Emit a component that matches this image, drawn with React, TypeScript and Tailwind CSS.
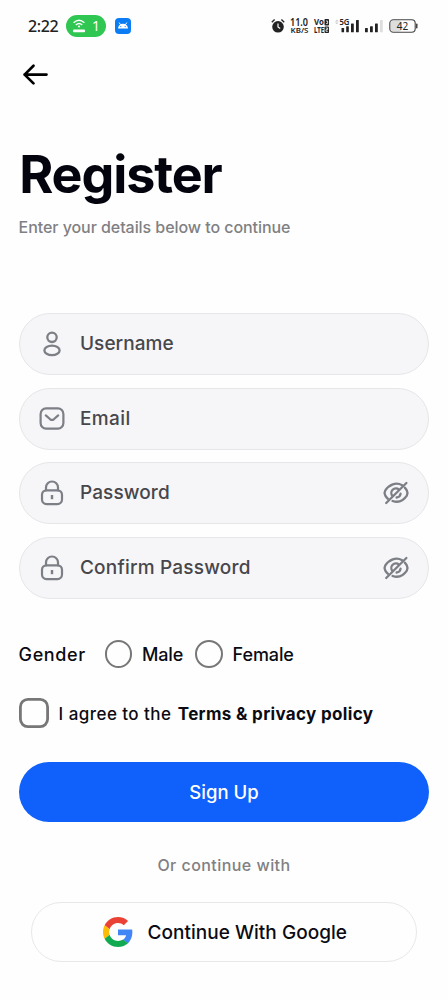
import React from "react";

function UserIcon() {
  return (
    <svg width="28" height="28" viewBox="0 0 28 28" fill="none" stroke="#7c7f85" strokeWidth="2.3">
      <circle cx="14" cy="7.3" r="4.7" />
      <ellipse cx="14" cy="20.4" rx="7.6" ry="4.7" />
    </svg>
  );
}

function MailIcon() {
  return (
    <svg width="28" height="28" viewBox="0 0 28 28" fill="none" stroke="#7c7f85" strokeWidth="2.2" strokeLinecap="round" strokeLinejoin="round">
      <rect x="2.6" y="3.4" width="22.8" height="20.2" rx="5.5" />
      <path d="M7.8 10.4 L12.2 14.3 Q14 15.6 15.8 14.3 L20.2 10.4" />
    </svg>
  );
}

function LockIcon() {
  return (
    <svg width="28" height="28" viewBox="0 0 28 28" fill="none" stroke="#7c7f85" strokeWidth="2.2" strokeLinecap="round">
      <rect x="4" y="11.3" width="20" height="13.8" rx="4.5" />
      <path d="M8 11.3 V8.5 A6 6 0 0 1 20 8.5 V11.3" />
      <path d="M14 16 V20.2" strokeLinecap="butt" strokeWidth="2.4" />
    </svg>
  );
}

function EyeOffIcon() {
  return (
    <svg width="28" height="28" viewBox="0 0 28 28" fill="none" stroke="#7c7f85" strokeWidth="2.3" strokeLinecap="round">
      <path d="M20.2 6.2 C13.8 2.8 7.2 5.6 3.3 11.4 Q1.8 14 3.3 16.6 Q4.4 18.5 6 19.8" />
      <path d="M22.8 8.6 Q24 9.8 24.8 11.4 Q26.2 14 24.8 16.6 C21.2 22 16.4 24 10.6 22" />
      <path d="M17 10.6 A4.6 4.6 0 0 0 10.6 17.2" />
      <path d="M18.6 14.6 A4.6 4.6 0 0 1 14.6 18.5" />
      <path d="M24.4 4 L4.2 24" />
    </svg>
  );
}

function GoogleIcon() {
  return (
    <svg width="30" height="30" viewBox="0 0 48 48">
      <path fill="#EA4335" d="M24 9.5c3.54 0 6.71 1.22 9.21 3.6l6.85-6.85C35.9 2.38 30.47 0 24 0 14.62 0 6.51 5.38 2.56 13.22l7.98 6.19C12.43 13.72 17.74 9.5 24 9.5z" />
      <path fill="#4285F4" d="M46.98 24.55c0-1.57-.15-3.09-.38-4.55H24v9.02h12.94c-.58 2.96-2.26 5.48-4.78 7.18l7.73 6c4.51-4.18 7.09-10.36 7.09-17.65z" />
      <path fill="#FBBC05" d="M10.53 28.59c-.48-1.45-.76-2.99-.76-4.59s.27-3.14.76-4.59l-7.98-6.19C.92 16.46 0 20.12 0 24c0 3.88.92 7.54 2.56 10.78l7.97-6.19z" />
      <path fill="#12AA50" d="M24 48c6.48 0 11.93-2.13 15.89-5.81l-7.73-6c-2.15 1.45-4.92 2.3-8.16 2.3-6.26 0-11.57-4.22-13.47-9.91l-7.98 6.19C6.51 42.62 14.62 48 24 48z" />
    </svg>
  );
}

function StatusBar() {
  return (
    <div className="flex h-[52px] items-center pl-7 pr-[30px] font-['Noto_Sans',sans-serif] text-[#222]">
      <span className="w-[31px] whitespace-nowrap text-[16px] font-medium tracking-[-0.4px]">2:22</span>
      <div className="ml-[7px] flex h-[22px] w-[40px] items-center justify-center gap-[6px] rounded-full bg-[#2fc651] text-white">
        <svg width="14" height="14" viewBox="0 0 14 14" fill="none" stroke="white" strokeWidth="1.4">
          <path d="M1.6 3.8 Q7 -1.4 12.4 3.8 M3.8 6 Q7 3 10.2 6" />
          <circle cx="7" cy="7.5" r="1" fill="white" stroke="none" />
          <rect x="1" y="10.5" width="12" height="2.8" rx="0.8" fill="white" stroke="none" />
        </svg>
        <span className="text-[14px] leading-none">1</span>
      </div>
      <svg className="ml-[9px]" width="16" height="16" viewBox="0 0 16 16">
        <rect width="16" height="16" rx="4" fill="#0b7cf4" />
        <path d="M3 10.4 A5 4.6 0 0 1 13 10.4 Z" fill="white" />
        <path d="M4.2 4.6 L5.6 6.8 M11.8 4.6 L10.4 6.8" stroke="white" />
        <circle cx="5.8" cy="8.6" r=".6" fill="#0b7cf4" />
        <circle cx="10.2" cy="8.6" r=".6" fill="#0b7cf4" />
      </svg>
      <svg className="ml-auto" width="14" height="16" viewBox="0 0 14 16" fill="none">
        <circle cx="7" cy="8.8" r="5.8" fill="#222" />
        <path d="M.8 4.2 L3.6 1.6 M13.2 4.2 L10.4 1.6" stroke="#222" strokeWidth="1.4" />
        <path d="M7 5.6 V9 L9.2 10.4" stroke="white" strokeWidth="1.2" />
      </svg>
      <svg className="ml-[5px] overflow-visible" width="19" height="18" viewBox="0 0 19 18" fill="#222" fontFamily="Noto Sans" fontWeight="600">
        <text x="0" y="8.8" fontSize="10.5" textLength="18" lengthAdjust="spacingAndGlyphs">11.0</text>
        <text x=".5" y="16.4" fontSize="7.2" textLength="18" lengthAdjust="spacingAndGlyphs">KB/S</text>
      </svg>
      <svg className="ml-[5px] overflow-visible" width="16" height="18" viewBox="0 0 16 18" fill="#222" fontFamily="Noto Sans" fontWeight="700">
        <text x="0" y="8.2" fontSize="8.2" textLength="9.8" lengthAdjust="spacingAndGlyphs">Vo</text>
        <text x="0" y="16" fontSize="8.2" textLength="10" lengthAdjust="spacingAndGlyphs">LTE</text>
        <rect x="10.5" y="2" width="4.5" height="6.6" rx=".8" />
        <rect x="10.5" y="9.4" width="4.5" height="6.6" rx=".8" />
        <path d="M12 4 H13.6 V6.6 H12 M11.8 11 H13.6 V12.6 H12 V14.3 H13.8" fill="none" stroke="#fff" strokeWidth=".8" />
      </svg>
      <svg className="ml-[5px] overflow-visible" width="25" height="16" viewBox="0 0 25 16" fill="#222">
        <path d="M0 3.4 L1.8 1.6 L3.6 3.4 Z M0 4.6 L1.8 6.2 L3.6 4.6 Z" fill="#ccc" />
        <text x="4.4" y="6.8" fontSize="8.4" fontWeight="600" fontFamily="Noto Sans" textLength="10" lengthAdjust="spacingAndGlyphs">5G</text>
        <rect x="6.5" y="10" width="2.6" height="4.3" rx=".5" />
        <rect x="11.2" y="8.2" width="2.6" height="6.1" rx=".5" />
        <rect x="16" y="5.5" width="2.8" height="8.8" rx=".5" />
        <rect x="21" y="2" width="2.8" height="12.3" rx=".5" />
      </svg>
      <svg className="ml-[5px]" width="18" height="16" viewBox="0 0 18 16" fill="#222">
        <rect x="0" y="10" width="2.8" height="4.3" rx=".5" />
        <rect x="5" y="8.2" width="2.8" height="6.1" rx=".5" />
        <rect x="10" y="5.5" width="2.8" height="8.8" rx=".5" />
        <rect x="15" y="2" width="2.8" height="12.3" rx=".5" fill="#ddd" />
      </svg>
      <svg className="ml-[6px]" width="29" height="14" viewBox="0 0 29 14">
        <rect x="1.5" y="1.5" width="11" height="11" rx="3" fill="#ddd" />
        <rect x=".8" y=".8" width="25.4" height="12.4" rx="3.5" fill="none" stroke="#444" strokeWidth="1.1" />
        <rect x="27" y="4.5" width="1.5" height="5" rx=".7" fill="#444" />
        <text x="13.5" y="10.6" textAnchor="middle" fontSize="10" fontFamily="Noto Sans" fill="#222">42</text>
      </svg>
    </div>
  );
}

function Field({ icon, label, labelClass, secret }: { icon: React.ReactNode; label: string; labelClass: string; secret?: boolean }) {
  return (
    <div className="flex h-[62px] items-center rounded-full border border-[#e6e5e8] bg-[#f6f5f8] pl-[18.4px] pr-[18.4px]">
      {icon}
      <span className={`ml-[14px] whitespace-nowrap text-[19px] font-medium leading-6 text-[#47474b] ${labelClass}`}>{label}</span>
      {secret && <span className="ml-auto"><EyeOffIcon /></span>}
    </div>
  );
}

export default function App() {
  return (
    <main className="h-[1000px] w-[448px] overflow-hidden bg-[#fefefe] font-['Inter',sans-serif] text-[#0b0b12]">
      <StatusBar />
      <button className="ml-[22px] mt-[11px] block h-6" aria-label="Back">
        <svg width="27" height="24" viewBox="0 0 27 24" fill="none" stroke="#000" strokeWidth="2.7" strokeLinecap="round" strokeLinejoin="round">
          <path d="M24.5 11.6 H2.5 M11.5 2.8 L2.6 11.6 L11.5 20.4" />
        </svg>
      </button>
      <div className="pl-[18.6px] pr-[18.6px]">
        <h1 className="mt-[56px] h-16 whitespace-nowrap pl-[0.6px] text-[52px] font-bold leading-[64px] tracking-[-1.1px] text-[#04040e]">Register</h1>
        <p className="mt-[8px] h-6 whitespace-nowrap text-[16px] font-[450] leading-6 tracking-[-0.06px] text-[#808083]">Enter your details below to continue</p>
        <form className="mt-[74px] flex flex-col gap-[12.6px]">
          <Field icon={<UserIcon />} label="Username" labelClass="tracking-[0.05px]" />
          <Field icon={<MailIcon />} label="Email" labelClass="tracking-[0.4px]" />
          <Field icon={<LockIcon />} label="Password" labelClass="tracking-[0.1px]" secret />
          <Field icon={<LockIcon />} label="Confirm Password" labelClass="tracking-[0.2px]" secret />
        </form>
        <div className="mt-[41px] flex h-7 items-center whitespace-nowrap text-[18px] font-medium">
          <span className="w-[86px] pt-px tracking-[0.6px]">Gender</span>
          <span className="h-[27.5px] w-[27.5px] rounded-full border-[2.4px] border-[#777]" />
          <span className="ml-[9.8px] w-[53.2px] pt-px tracking-[-0.1px]">Male</span>
          <span className="h-[27.5px] w-[27.5px] rounded-full border-[2.4px] border-[#777]" />
          <span className="ml-[10px] pt-px tracking-[-0.1px]">Female</span>
        </div>
        <div className="mt-[30px] flex h-[30px] items-center whitespace-nowrap text-[17px]">
          <svg width="30" height="30" viewBox="0 0 30 30" fill="none" stroke="#777" strokeWidth="2.8">
            <rect x="1.4" y="1.4" width="27.2" height="27.2" rx="7.5" />
          </svg>
          <span className="ml-[10px] w-[119.2px] pt-[3px] font-medium tracking-[0.45px]">I agree to the</span>
          <span className="pt-[3px] font-bold tracking-[0.33px]">Terms &amp; privacy policy</span>
        </div>
        <button className="mt-[34px] block h-[60px] w-full rounded-full bg-[#1061fb] pt-[2px] text-[18.5px] font-medium text-white">Sign Up</button>
        <p className="mt-[31.4px] h-6 text-center text-[16px] font-[450] leading-6 tracking-[0.45px] text-[#808083]">Or continue with</p>
        <button className="mx-[12.4px] mt-[24.6px] flex h-[60px] w-[386px] items-center rounded-full border border-[#e8e8ea] pl-[71px]">
          <GoogleIcon />
          <span className="ml-[14.5px] whitespace-nowrap pt-[2px] text-[19px] font-medium tracking-[0.03px]">Continue With Google</span>
        </button>
      </div>
    </main>
  );
}
